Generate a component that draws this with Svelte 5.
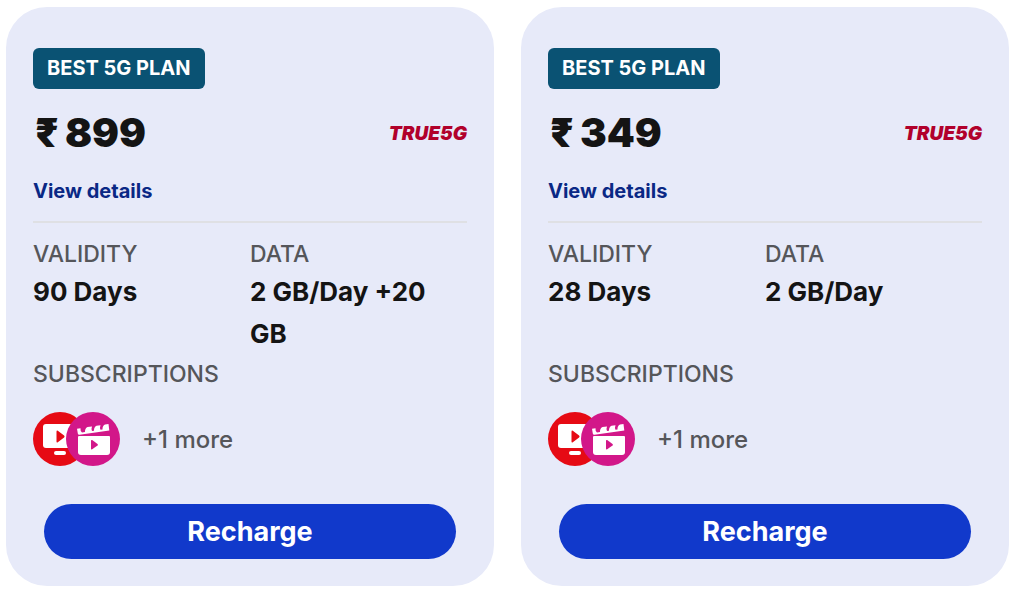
<script>
  const plans = [
    { price: '899', validity: '90 Days', data: '2 GB/Day +20 GB' },
    { price: '349', validity: '28 Days', data: '2 GB/Day' }
  ]
</script>

<main class="plans">
  {#each plans as plan}
    <article class="card">
      <span class="badge">BEST 5G PLAN</span>
      <div class="price-row">
        <h2 class="price"><span class="rupee">₹</span>{plan.price}</h2>
        <span class="true5g">TRUE5G</span>
      </div>
      <a class="details" href="#details">View details</a>
      <dl class="facts">
        <div>
          <dt>VALIDITY</dt>
          <dd>{plan.validity}</dd>
        </div>
        <div>
          <dt>DATA</dt>
          <dd>{plan.data}</dd>
        </div>
      </dl>
      <h3 class="label">SUBSCRIPTIONS</h3>
      <div class="apps">
        <svg class="app" viewBox="0 0 54 54" aria-hidden="true">
          <circle cx="27" cy="27" r="27" fill="#e60a14" />
          <rect x="10" y="12" width="34" height="24" rx="3" fill="#fff" />
          <rect x="21" y="39" width="12" height="4" rx="2" fill="#fff" />
          <path d="M23.5 20v9.5q0 1.5 1.3.7l6.3-4.8q1-.9 0-1.8l-6.3-4.8q-1.3-.8-1.3 1.2z" fill="#e60a14" />
        </svg>
        <svg class="app" viewBox="0 0 54 54" aria-hidden="true">
          <circle cx="27" cy="27" r="27" fill="#d21789" />
          <path d="M12 25q0-1 1-1h30q1 0 1 1v15q0 3-3 3h-26q-3 0-3-3z" fill="#fff" />
          <path d="M11 16.7l3.5-.5q-.3 3.3 1.500 4.300l3-.5q-.2-3.500 2.500-4.900l4.500-.7q-1 2.500 0 4.600l2-.3q-.2-3.500 2.500-4.900l4-.6q-1 2.500 0 4.600l2-.3q-.2-3.500 2.500-4.900l3.500-.5.8 6.400-29.800 4.300q-1.500.2-1.700-1.300z" fill="#fff" />
          <path d="M25 29v7.5q0 1.5 1.2.8l5.3-3.9q.9-.7 0-1.400l-5.3-3.900q-1.2-.6-1.2.9z" fill="#d21789" />
        </svg>
        <span class="more">+1 more</span>
      </div>
      <button class="recharge" type="button">Recharge</button>
    </article>
  {/each}
</main>

<style>
  :global(body) {
    margin: 0;
    background: #fff;
  }

  .plans {
    display: grid;
    grid-template-columns: 1fr 1fr;
    gap: 27px;
    padding: 7px 15px 15px 6px;
    font-family: Inter, "Liberation Sans", sans-serif;
    color: #141414;
  }

  .card {
    display: flex;
    flex-direction: column;
    padding: 41px 27px 27px;
    border-radius: 41px;
    background: #e7eaf9;
  }

  .badge {
    align-self: flex-start;
    padding: 0 14px;
    border-radius: 6px;
    background: #0a5273;
    color: #fff;
    font-size: 20px;
    font-weight: 700;
    line-height: 41px;
  }

  .price-row {
    display: flex;
    align-items: center;
    justify-content: space-between;
    margin-top: 20px;
  }

  .price {
    margin: 0;
    font-size: 40px;
    font-weight: 900;
    line-height: 48px;
  }

  .rupee {
    margin: 0 6px 0 2px;
  }

  .true5g {
    color: #b1002b;
    font-size: 19px;
    font-style: italic;
    font-weight: 900;
  }

  .details {
    align-self: flex-start;
    margin-top: 20px;
    color: #0a2885;
    font-size: 20px;
    font-weight: 700;
    line-height: 28px;
    text-decoration: none;
  }

  .facts {
    display: grid;
    flex: 1;
    grid-template-columns: 1fr 1fr;
    margin: 16px 0 0;
    padding-top: 14px;
    border-top: 2px solid #dfe0e4;
  }

  dt,
  .label {
    margin: 0;
    color: #55565a;
    font-size: 23px;
    font-weight: 500;
    line-height: 34px;
  }

  dd {
    margin: 0;
    font-size: 26px;
    font-weight: 700;
    line-height: 42px;
  }

  .label {
    margin-top: 2px;
  }

  .apps {
    display: flex;
    align-items: center;
    margin-top: 21px;
  }

  .app {
    width: 54px;
    height: 54px;
  }

  .app + .app {
    margin-left: -21px;
  }

  .more {
    margin-left: 22px;
    color: #55565a;
    font-size: 24px;
    font-weight: 500;
  }

  .recharge {
    margin: 38px 11px 0;
    height: 55px;
    border: none;
    border-radius: 28px;
    background: #1139cb;
    color: #fff;
    font-family: inherit;
    font-size: 27px;
    font-weight: 700;
    cursor: pointer;
  }
</style>
